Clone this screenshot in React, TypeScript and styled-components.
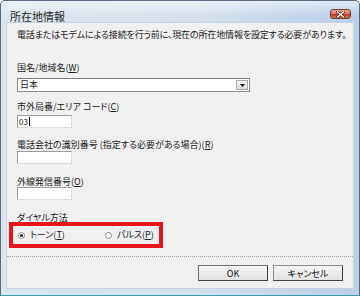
import React from 'react';
import styled, { createGlobalStyle } from 'styled-components';

const Global = createGlobalStyle`
  html, body { margin: 0; padding: 0; background: #ffffff; }
  body { font-family: "Noto Sans CJK JP", "Noto Sans", sans-serif; }
`;

const Window = styled.div`
  width: 360px;
  height: 296px;
  box-sizing: border-box;
  display: flex;
  flex-direction: column;
  border: 1px solid #56697e;
  border-bottom-color: #3d9cb8;
  border-radius: 5px 5px 0 0;
  background: linear-gradient(to right, #dde5ee 0%, #d6e0eb 55%, #b8cfe9 100%);
  overflow: hidden;
`;

const TitleBar = styled.div`
  height: 21px;
  flex: none;
  display: flex;
  align-items: flex-start;
  justify-content: space-between;
  padding: 0 8px 0 9px;
  background: linear-gradient(to bottom, rgba(255,255,255,0.55), rgba(255,255,255,0) 70%);
`;

const Title = styled.div`
  font-size: 11px;
  line-height: 11px;
  margin-top: 10px;
  color: #1e1e1e;
`;

const CloseButton = styled.div`
  margin-top: 8px;
  width: 21px;
  height: 10px;
  box-sizing: border-box;
  border: 1px solid #7a3a30;
  border-radius: 3px;
  background: linear-gradient(to bottom, #e9a99a 0%, #d9766a 45%, #c2402e 55%, #d8674f 100%);
  display: flex;
  align-items: center;
  justify-content: center;
`;

const Client = styled.div`
  flex: 1;
  margin: 0 5px 6px 5px;
  box-sizing: border-box;
  border: 1px solid #c4d2e2;
  background: #f0f0f0;
  display: flex;
  flex-direction: column;
  padding: 6px 0 0 0;
  font-size: 9px;
  color: #1a1a1a;
`;

const Body = styled.div`
  display: flex;
  flex-direction: column;
  padding: 0 0 0 10px;
`;

const Text = styled.div<{ $mt?: number; $ls?: number }>`
  line-height: 12px;
  height: 12px;
  white-space: nowrap;
  font-feature-settings: "palt";
  letter-spacing: ${p => p.$ls ?? 0}px;
  margin-top: ${p => p.$mt ?? 0}px;
`;

const Combo = styled.div`
  margin-top: 4px;
  width: 233px;
  height: 14px;
  box-sizing: border-box;
  border: 1px solid #8c8c8c;
  border-top-color: #7a7a7a;
  background: #fff;
  display: flex;
  align-items: stretch;
  justify-content: space-between;
  font-size: 9px;
`;

const ComboValue = styled.div`
  padding-left: 2px;
  line-height: 12px;
`;

const ComboArrow = styled.div`
  width: 12px;
  margin: 1px;
  box-sizing: border-box;
  border: 1px solid #a8a8a8;
  background: linear-gradient(to bottom, #f6f6f6, #dadada);
  display: flex;
  align-items: center;
  justify-content: center;
`;

const TextBox = styled.div<{ $mt?: number }>`
  margin-top: ${p => p.$mt ?? 0}px;
  width: 55px;
  height: 13px;
  box-sizing: border-box;
  border: 1px solid #9c9c9c;
  border-right-color: #dcdcdc;
  border-bottom-color: #dcdcdc;
  background: #fff;
  font-size: 8px;
  line-height: 11px;
  padding-left: 1px;
  display: flex;
  align-items: center;
`;

const Caret = styled.span`
  display: inline-block;
  width: 1px;
  height: 9px;
  background: #000;
  margin-left: 1px;
`;

const RadioFrame = styled.div`
  margin: -2px 0 0 -8px;
  width: 154px;
  height: 26px;
  box-sizing: border-box;
  border: 4px solid #e8141c;
  display: flex;
  align-items: center;
  padding-left: 5px;
`;

const RadioItem = styled.label<{ $w: number }>`
  width: ${p => p.$w}px;
  display: flex;
  align-items: center;
  gap: 5px;
  font-size: 9px;
  line-height: 12px;
  font-feature-settings: "palt";
`;

const RadioCircle = styled.span<{ $checked?: boolean }>`
  width: 7px;
  height: 7px;
  box-sizing: border-box;
  border-radius: 50%;
  border: 1px solid #8a8a8a;
  background: #fff;
  display: flex;
  align-items: center;
  justify-content: center;
  &::after {
    content: "";
    width: 3px;
    height: 3px;
    border-radius: 50%;
    background: ${p => (p.$checked ? '#222' : 'transparent')};
  }
`;

const Separator = styled.div`
  margin-top: 8px;
  height: 0;
  border-top: 1px dotted #a8a8a8;
`;

const ButtonRow = styled.div`
  display: flex;
  justify-content: flex-end;
  gap: 5px;
  padding: 8px 10px 0 0;
`;

const Button = styled.div<{ $focus?: boolean }>`
  width: 70px;
  height: 16px;
  box-sizing: border-box;
  border: 1px solid ${p => (p.$focus ? '#8a8a8a' : '#707070')};
  border-right-color: #404040;
  border-bottom-color: #404040;
  background: linear-gradient(to bottom, #f4f4f4, #e2e2e2);
  display: flex;
  align-items: center;
  justify-content: center;
  font-size: 9px;
  font-family: "Noto Sans CJK JP", "Noto Sans", sans-serif;
  font-feature-settings: "palt";
  color: #111;
`;

export default function App() {
  return (
    <>
      <Global />
      <Window>
        <TitleBar>
          <Title>所在地情報</Title>
          <CloseButton>
            <svg width="9" height="7" viewBox="0 0 9 7">
              <path d="M1.5 1 L7.5 6 M7.5 1 L1.5 6" stroke="#5a1a12" strokeWidth="2.6" strokeLinecap="square" />
              <path d="M1.5 1 L7.5 6 M7.5 1 L1.5 6" stroke="#ffffff" strokeWidth="1.4" strokeLinecap="square" />
            </svg>
          </CloseButton>
        </TitleBar>
        <Client>
          <Body>
            <Text $ls={-0.15}>電話またはモデムによる接続を行う前に、現在の所在地情報を設定する必要があります。</Text>
            <Text $mt={21}>国名/地域名(<u>W</u>)</Text>
            <Combo>
              <ComboValue>日本</ComboValue>
              <ComboArrow>
                <svg width="5" height="3" viewBox="0 0 5 3">
                  <path d="M0 0 H5 L2.5 3 Z" fill="#000" />
                </svg>
              </ComboArrow>
            </Combo>
            <Text $mt={9}>市外局番/エリア コード(<u>C</u>)</Text>
            <TextBox $mt={2}>03<Caret /></TextBox>
            <Text $mt={11}>電話会社の識別番号 (指定する必要がある場合)(<u>R</u>)</Text>
            <TextBox $mt={0}></TextBox>
            <Text $mt={12}>外線発信番号(<u>O</u>)</Text>
            <TextBox $mt={-1}></TextBox>
            <Text $mt={12}>ダイヤル方法</Text>
            <RadioFrame>
              <RadioItem $w={87}>
                <RadioCircle $checked />
                <span>トーン(<u>T</u>)</span>
              </RadioItem>
              <RadioItem $w={50}>
                <RadioCircle />
                <span>パルス(<u>P</u>)</span>
              </RadioItem>
            </RadioFrame>
          </Body>
          <Separator />
          <ButtonRow>
            <Button>OK</Button>
            <Button $focus>キャンセル</Button>
          </ButtonRow>
        </Client>
      </Window>
    </>
  );
}
